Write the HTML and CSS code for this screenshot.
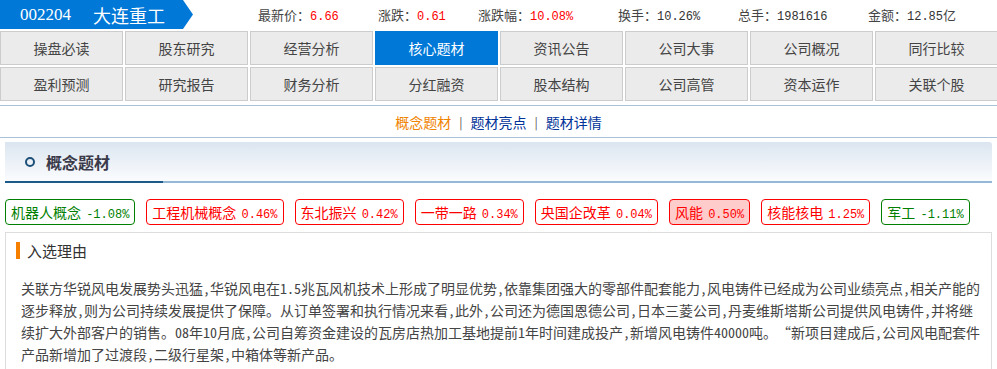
FILE: index.html
```html
<!DOCTYPE html>
<html>
<head>
<meta charset="utf-8">
<title>大连重工 核心题材</title>
<link rel="stylesheet" href="styles.css">
</head>
<body>

<div class="top">
    <div class="ribbon">
        <span class="code">002204</span>
        <span class="name">大连重工</span>
    </div>
    <div class="stats">
        <span class="stat">最新价：<b class="up">6.66</b></span>
        <span class="stat">涨跌：<b class="up">0.61</b></span>
        <span class="stat">涨跌幅：<b class="up">10.08%</b></span>
        <span class="stat">换手：<b>10.26%</b></span>
        <span class="stat">总手：<b>1981616</b></span>
        <span class="stat">金额：<b>12.85</b>亿</span>
    </div>
</div>

<!-- 导航 -->
<div class="nav">
    <a href="#">操盘必读</a>
    <a href="#">股东研究</a>
    <a href="#">经营分析</a>
    <a href="#" class="cur">核心题材</a>
    <a href="#">资讯公告</a>
    <a href="#">公司大事</a>
    <a href="#">公司概况</a>
    <a href="#">同行比较</a>
    <a href="#">盈利预测</a>
    <a href="#">研究报告</a>
    <a href="#">财务分析</a>
    <a href="#">分红融资</a>
    <a href="#">股本结构</a>
    <a href="#">公司高管</a>
    <a href="#">资本运作</a>
    <a href="#">关联个股</a>
</div>

<div class="subnav">
    <a href="#" class="on">概念题材</a>
    <span class="sep">|</span>
    <a href="#">题材亮点</a>
    <span class="sep">|</span>
    <a href="#">题材详情</a>
</div>

<div class="section">
    <div class="sec-head">
        <i class="dot"></i>
        <h3>概念题材</h3>
    </div>
    <div class="sec-line"></div>

    <div class="tags">
        <span class="tag down">机器人概念 <em>-1.08%</em></span>
        <span class="tag">工程机械概念 <em>0.46%</em></span>
        <span class="tag">东北振兴 <em>0.42%</em></span>
        <span class="tag">一带一路 <em>0.34%</em></span>
        <span class="tag">央国企改革 <em>0.04%</em></span>
        <span class="tag sel">风能 <em>0.50%</em></span>
        <span class="tag">核能核电 <em>1.25%</em></span>
        <span class="tag down">军工 <em>-1.11%</em></span>
    </div>

    <div class="reason">
        <div class="reason-title">入选理由</div>
        <p>关联方华锐风电发展势头迅猛,华锐风电在1.5兆瓦风机技术上形成了明显优势,依靠集团强大的零部件配套能力,风电铸件已经成为公司业绩亮点,相关产能的逐步释放,则为公司持续发展提供了保障。从订单签署和执行情况来看,此外,公司还为德国恩德公司,日本三菱公司,丹麦维斯塔斯公司提供风电铸件,并将继续扩大外部客户的销售。08年10月底,公司自筹资金建设的瓦房店热加工基地提前1年时间建成投产,新增风电铸件40000吨。“新项目建成后,公司风电配套件产品新增加了过渡段,二级行星架,中箱体等新产品。</p>
    </div>
</div>

</body>
</html>
```

FILE: styles.css
```css
/* CSS */
body {
    margin: 0;
    width: 997px;
    overflow: hidden;
    font-family: "Noto Sans CJK SC", "Liberation Sans", sans-serif;
    font-size: 14px;
    color: #333;
    background: #fff;
}

a {
    text-decoration: none;
}

/* 顶部 */
.top {
    display: flex;
    align-items: center;
    height: 29px;
}

.ribbon {
    width: 193px;
    height: 29px;
    display: flex;
    align-items: center;
    background-color: #0078d7;
    clip-path: polygon(0 0, 183px 0, 193px 50%, 183px 100%, 0 100%);
    color: #fff;
}

.ribbon .code {
    margin-left: 20px;
    font-family: "Liberation Serif", serif;
    font-size: 17px;
}

.ribbon .name {
    margin-left: 22px;
    font-size: 18px;
}

.stats {
    display: grid;
    grid-template-columns: 120px 100px 140px 120px 130px auto;
    margin-left: 65px;
    font-size: 13px;
    color: #444;
}

.stat b {
    font-weight: normal;
    font-family: "Liberation Mono", monospace;
    font-size: 12px;
    color: #333;
}

.stat b.up {
    color: #f00;
}

/* 导航 */
.nav {
    display: grid;
    grid-template-columns: repeat(8, 123px);
    grid-auto-rows: 34px;
    gap: 2px;
    margin-top: 2px;
}

.nav a {
    display: flex;
    align-items: center;
    justify-content: center;
    background-color: #ebebeb;
    border: 1px solid #ccc;
    color: #444;
    font-size: 14px;
}

.nav a.cur {
    background-color: #0078d7;
    border-color: #0078d7;
    color: #fff;
}

.subnav {
    margin-top: 4px;
    height: 31px;
    border-top: 1px solid #a9c1d9;
    border-bottom: 1px solid #a9c1d9;
    display: flex;
    align-items: center;
    justify-content: center;
    gap: 8px;
    font-size: 14px;
}

.subnav a {
    color: #003399;
}

.subnav a.on {
    color: #f08300;
}

.subnav .sep {
    color: #555;
    font-size: 12px;
}

/* 概念题材 */
.section {
    margin: 4px 5px 0 5px;
}

.sec-head {
    height: 39px;
    display: flex;
    align-items: center;
    background: linear-gradient(#dbe5f0, #fbfcfe);
    border-radius: 0 3px 0 0;
}

.sec-head .dot {
    width: 6px;
    height: 6px;
    border: 2px solid #1c4f78;
    border-radius: 50%;
    margin-left: 20px;
}

.sec-head h3 {
    margin: 0 0 0 11px;
    font-size: 16px;
    font-weight: bold;
    color: #3a3a4a;
}

.sec-line {
    height: 2px;
    background: linear-gradient(to right, #1c5a8a 158px, #94b8d6 158px);
}

.tags {
    display: flex;
    gap: 11px;
    margin-top: 16px;
}

.tag {
    height: 24px;
    line-height: 24px;
    padding: 0 5px;
    border: 1px solid #f00;
    border-radius: 4px;
    color: #f00;
    font-size: 14px;
    white-space: nowrap;
}

.tag em {
    font-style: normal;
    font-family: "Liberation Mono", monospace;
    font-size: 12px;
    margin-left: 2px;
}

.tag.down {
    border-color: #008000;
    color: #008000;
}

.tag.sel {
    background-color: #ffcccc;
}

.reason {
    margin-top: 7px;
    border: 1px solid #ddd;
    padding: 9px 11px 20px 15px;
    height: 200px;
}

.reason-title {
    border-left: 4px solid #f77f00;
    padding-left: 7px;
    margin-left: -5px;
    line-height: 17px;
    font-size: 15px;
    color: #333;
}

.reason p {
    margin: 18px 0 0 0;
    line-height: 22px;
    font-size: 14px;
    color: #444;
    font-feature-settings: "hwid" 1;
}
```
